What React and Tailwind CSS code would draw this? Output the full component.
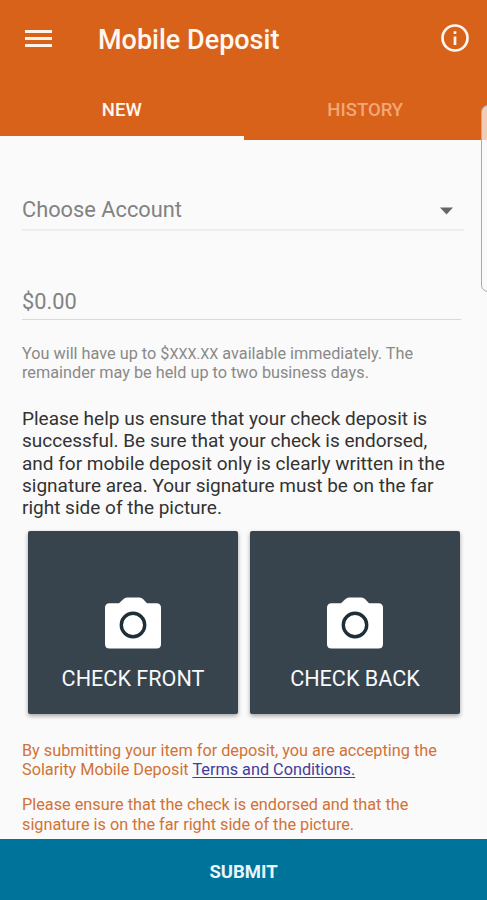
import React from "react";

function Lines({ items, className }) {
  return (
    <p className={className}>
      {items.map((line, i) => (
        <span key={i} className="block whitespace-nowrap">
          {line}
        </span>
      ))}
    </p>
  );
}

function CheckButton({ label }) {
  return (
    <button className="flex h-[183px] w-[210px] flex-col items-center rounded-[2px] bg-[#37444d] pt-[66px] shadow-[0_2px_4px_rgba(0,0,0,0.35)]">
      <svg width="56" height="52" viewBox="0 0 56 52">
        <path
          fill="#fff"
          d="M22 .5h12.500q2 0 3.500 1.500L42 6.200h9.500Q56 6.200 56 10.700V47q0 4.500-4.500 4.500h-47Q0 51.500 0 47V10.700Q0 6.200 4.500 6.200H14L18.500 2Q20 .5 22 .5z"
        />
        <circle cx="28" cy="28" r="11.700" fill="#fff" stroke="#1f2f39" strokeWidth="3.400" />
      </svg>
      <span className="mt-[16px] whitespace-nowrap text-[21.600px] leading-[28px] text-[#f8f9fb]">{label}</span>
    </button>
  );
}

export default function App() {
  return (
    <div className="relative flex h-[900px] w-[487px] flex-col overflow-hidden bg-[#fafafa] font-['Roboto',sans-serif]">
      <header className="h-[140px] shrink-0 bg-[#d9621a] text-[#fff7f0]">
        <div className="flex h-[76px] items-center pl-[25px] pr-[18px]">
          <button className="flex w-[27px] flex-col gap-[4px]" aria-label="Menu">
            <span className="h-[3px] bg-[#fff4ea]" />
            <span className="h-[3px] bg-[#fff4ea]" />
            <span className="h-[3px] bg-[#fff4ea]" />
          </button>
          <h1 className="ml-[46px] mt-[4px] whitespace-nowrap text-[27px] font-medium leading-[32px]">Mobile Deposit</h1>
          <svg className="ml-auto" width="28" height="28" viewBox="0 0 28 28" aria-label="Information">
            <circle cx="14" cy="14" r="12.500" fill="none" stroke="#fff7f0" strokeWidth="2.700" />
            <path d="M14 12.500v8.500M14 7.300v2.700" stroke="#fff7f0" strokeWidth="2.700" />
          </svg>
        </div>
        <nav className="grid h-[64px] grid-cols-2 grid-rows-[64px] text-center text-[18.500px] font-medium leading-[68px]">
          <span className="h-[64px] border-b-[4px] border-[#fafafa]">NEW</span>
          <span className="h-[64px] text-[#f3a777]">HISTORY</span>
        </nav>
      </header>

      <main className="flex h-[699px] shrink-0 flex-col pl-[22px]">
        <div className="mt-[48px] flex h-[43px] w-[442px] items-center justify-between border-b-2 border-[#ededed] pr-[11px]">
          <span className="whitespace-nowrap pt-[2px] text-[21.800px] leading-[42px] text-[#828282]">Choose Account</span>
          <svg className="mt-[5px]" width="13" height="8" viewBox="0 0 13 8">
            <path d="M0 .5h13L6.500 7.500z" fill="#666" />
          </svg>
        </div>
        <div className="mt-[49px] h-[40px] w-[439px] border-b border-[#d9d9d9] text-[21.800px] leading-[44px] text-[#828282]">
          $0.00
        </div>
        <Lines
          className="mt-[24px] text-[16.250px] leading-[19.200px] text-[#898989]"
          items={[
            <>
              You will have up to $<span className="text-[14.400px] leading-none">XXX.XX</span> available immediately. The
            </>,
            "remainder may be held up to two business days.",
          ]}
        />
        <Lines
          className="mt-[25.500px] text-[19px] leading-[22.300px] text-[#333]"
          items={[
            "Please help us ensure that your check deposit is",
            "successful. Be sure that your check is endorsed,",
            "and for mobile deposit only is clearly written in the",
            "signature area. Your signature must be on the far",
            "right side of the picture.",
          ]}
        />
        <div className="ml-[6px] mt-[11.500px] flex gap-[12px]">
          <CheckButton label="CHECK FRONT" />
          <CheckButton label="CHECK BACK" />
        </div>
        <div className="mt-[27px] text-[16.250px] leading-[19.300px] text-[#d17236]">
          <Lines
            items={[
              "By submitting your item for deposit, you are accepting the",
              <>
                Solarity Mobile Deposit{" "}
                <a className="text-[#443d9b] underline underline-offset-2">Terms and Conditions.</a>
              </>,
            ]}
          />
          <Lines
            className="mt-[16px]"
            items={["Please ensure that the check is endorsed and that the", "signature is on the far right side of the picture."]}
          />
        </div>
      </main>

      <button className="h-[61px] shrink-0 bg-[#00739b] pt-[5px] text-center text-[18.500px] font-bold leading-[56px] text-[#e8f6fb]">
        SUBMIT
      </button>

      <div className="absolute left-[481px] top-[105px] h-[187px] w-[20px] rounded-[7px] border border-[#aaa] bg-[#fafafa]/70" />
    </div>
  );
}
